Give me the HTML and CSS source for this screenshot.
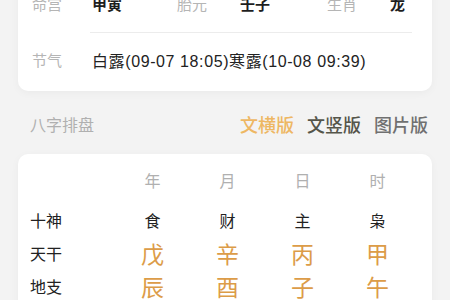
FILE: index.html
```html
<!DOCTYPE html>
<html lang="zh-CN">
<head>
    <meta charset="UTF-8">
    <meta name="viewport" content="width=device-width, initial-scale=1.0">
    <title>八字排盘</title>
    <link rel="stylesheet" href="styles.css">
</head>
<body>
    <div class="card info-card">
        <div class="info-row triple">
            <span class="label">命宫</span><span class="value">甲寅</span>
            <span class="label">胎元</span><span class="value">壬子</span>
            <span class="label">生肖</span><span class="value">龙</span>
        </div>
        <div class="divider"></div>
        <div class="info-row last">
            <span class="label">节气</span>
            <span class="text">白露(09-07 18:05)寒露(10-08 09:39)</span>
        </div>
    </div>

    <div class="section-head">
        <span class="section-title">八字排盘</span>
        <div class="tabs">
            <span class="tab active">文横版</span>
            <span class="tab">文竖版</span>
            <span class="tab">图片版</span>
        </div>
    </div>

    <div class="card chart-card">
        <div class="chart-row head">
            <span></span><span>年</span><span>月</span><span>日</span><span>时</span>
        </div>
        <div class="chart-row">
            <span class="row-label">十神</span><span>食</span><span>财</span><span>主</span><span>枭</span>
        </div>
        <div class="chart-row big">
            <span class="row-label">天干</span><span>戊</span><span>辛</span><span>丙</span><span>甲</span>
        </div>
        <div class="chart-row big">
            <span class="row-label">地支</span><span>辰</span><span>酉</span><span>子</span><span>午</span>
        </div>
    </div>
</body>
</html>
```

FILE: styles.css
```css
body { margin: 0; background: #f3f3f3; font-family: "Noto Sans CJK SC", "Noto Sans", sans-serif; color: #222; }
.card { background: #fff; margin: 0 18px; border-radius: 10px; box-shadow: 0 2px 8px rgba(0,0,0,0.04); }
.info-card { margin-top: -26px; padding-left: 14px; padding-right: 20px; }
.info-row { display: flex; align-items: center; height: 58px; font-size: 15px; }
.info-row.last { box-sizing: border-box; padding-bottom: 5px; }
.info-row.triple { display: grid; grid-template-columns: 60px 85px 63px 87px 63px auto; }
.info-row .label { color: #b5b5b5; width: 60px; }
.info-row .value { font-weight: bold; color: #1e1e1e; }
.info-row .text { color: #222; font-family: "Liberation Sans", "Noto Sans CJK SC", sans-serif; font-size: 16px; letter-spacing: 0.6px; }
.divider { height: 1px; background: #ececec; margin-left: 58px; }
.section-head { display: flex; justify-content: space-between; align-items: center; height: 30px; margin: 18px 22px 15px 30px; }
.section-title { font-size: 16px; color: #b0b0b0; }
.tabs { display: flex; gap: 13px; }
.tab { font-size: 18px; font-weight: 500; color: #707070; }
.tab:nth-child(2) { color: #55554a; }
.tab.active { color: #eeb763; }
.chart-card { padding: 9px 0 0 12px; height: 160px; overflow: hidden; }
.chart-row { display: grid; grid-template-columns: 85px 75px 75px 75px 75px; height: 33px; align-items: center; font-size: 16px; }
.chart-row span { text-align: center; }
.chart-row .row-label { text-align: left; }
.chart-row.head { color: #b0b0b0; margin-bottom: 7px; }
.chart-row.big span { font-size: 23px; color: #dc9c48; }
.chart-row.big .row-label { font-size: 16px; color: #222; }
```
